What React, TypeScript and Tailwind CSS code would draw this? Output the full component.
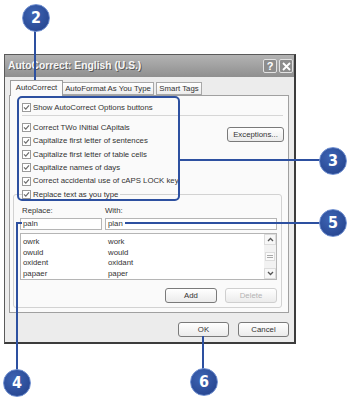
import React from "react";

const options = [
  "Correct TWo INitial CApitals",
  "Capitalize first letter of sentences",
  "Capitalize first letter of table cells",
  "Capitalize names of days",
  "Correct accidental use of cAPS LOCK key",
];

const entries = [
  ["owrk", "work"],
  ["owuld", "would"],
  ["oxident", "oxidant"],
  ["papaer", "paper"],
];

function Check() {
  return (
    <span className="flex h-[9px] w-[9px] shrink-0 items-center justify-center border border-[#9a9a9a] bg-white">
      <svg width="7" height="7" viewBox="0 0 7 7">
        <path d="M1 3.4 L2.8 5.2 L6 1.4" fill="none" stroke="#6d6d6d" strokeWidth="1.2" />
      </svg>
    </span>
  );
}

function Badge({ n, className }: { n: string; className: string }) {
  return (
    <div
      className={`absolute flex h-[28px] w-[28px] items-center justify-center rounded-full border-[1.5px] border-[#6f8fd0] bg-[radial-gradient(circle_at_40%_35%,#3d64b4,#223f88)] font-['Liberation_Sans_Narrow','DejaVu_Sans_Condensed',sans-serif] text-[16px] font-bold text-white ${className}`}
    >
      {n}
    </div>
  );
}

function Btn({ label, disabled, className }: { label: string; disabled?: boolean; className: string }) {
  return (
    <div
      className={`flex h-[15px] items-center justify-center rounded-[3px] border bg-gradient-to-b from-white to-[#ebebeb] ${
        disabled ? "border-[#cfcfcf] text-[#b3b3b3]" : "border-[#7a7a7a] text-[#333]"
      } ${className}`}
    >
      {label}
    </div>
  );
}

export default function App() {
  return (
    <div className="relative h-[398px] w-[350px] overflow-hidden whitespace-nowrap bg-white font-['Liberation_Sans',Arial,sans-serif] text-[7.8px] leading-none text-[#333]">
      <div className="pl-[4px] pt-[54px]">
        {/* dialog */}
        <div className="flex h-[290px] w-[292px] flex-col border border-r-2 border-b-2 border-[#5a5a5a] border-r-[#3c3c3c] border-b-[#3c3c3c] bg-[#ececec]">
          {/* title bar */}
          <div className="flex h-[22px] items-center justify-between bg-gradient-to-b from-[#b3b3b3] to-[#8f8f8f] pl-[3px] pr-[1px]">
            <span className="text-[10.3px] font-bold text-[#f6f6f6] [text-shadow:1px_1px_0_#5a5a5a]">
              AutoCorrect: English (U.S.)
            </span>
            <div className="flex gap-[2px]">
              <div className="flex h-[14px] w-[14px] items-center justify-center rounded-[2px] border border-[#e2e2e2] bg-[#8d8d8d] text-[11px] font-bold text-white">
                ?
              </div>
              <div className="flex h-[14px] w-[14px] items-center justify-center rounded-[2px] border border-[#e2e2e2] bg-[#8d8d8d]">
                <svg width="9" height="9" viewBox="0 0 9 9">
                  <path d="M1 1 L8 8 M8 1 L1 8" stroke="white" strokeWidth="1.8" />
                </svg>
              </div>
            </div>
          </div>

          {/* tabs */}
          <div className="relative z-10 ml-[5px] mt-[3px] flex h-[16px] items-end">
            <div className="flex h-[16px] w-[53px] items-center justify-center border border-b-0 border-[#9c9c9c] bg-[#fafafa] pb-[1px]">
              AutoCorrect
            </div>
            <div className="mb-[1px] flex h-[13px] w-[91px] items-center justify-center border border-l-0 border-[#a8a8a8] bg-gradient-to-b from-white to-[#ececec]">
              AutoFormat As You Type
            </div>
            <div className="mb-[1px] ml-[2px] flex h-[13px] w-[46px] items-center justify-center border border-[#a8a8a8] bg-gradient-to-b from-white to-[#ececec]">
              Smart Tags
            </div>
          </div>

          {/* panel */}
          <div className="-mt-px ml-[4px] flex h-[218px] w-[280px] flex-col border border-[#a0a0a0] bg-[#fafafa] pr-[5px]">
            <div className="box-content flex h-[13px] items-center gap-[2px] pl-[12px] pt-[5px]">
              <Check />
              <span>Show AutoCorrect Options buttons</span>
            </div>
            <div className="ml-[12px] mt-[1px] h-px bg-[#d6d6d6]" />
            <div className="mt-[5px] flex justify-between">
              <div className="flex flex-col pl-[12px]">
                {options.map((o) => (
                  <div key={o} className="flex h-[13.4px] items-center gap-[2px]">
                    <Check />
                    <span>{o}</span>
                  </div>
                ))}
              </div>
              <Btn label="Exceptions..." className="mr-[-1px] mt-[6px] w-[57px]" />
            </div>

            <fieldset className="ml-[3px] mr-[1px] rounded-[3px] border border-[#d2d2d2] pb-[4px] pl-[6px] pr-[4px]">
              <legend className="ml-[2px] flex h-[13.4px] items-center gap-[2px] pr-[2px]">
                <Check />
                <span>Replace text as you type</span>
              </legend>
              <div className="mt-[4px] flex h-[12px] items-center">
                <span className="w-[85px] pl-[2px]">Replace:</span>
                <span>With:</span>
              </div>
              <div className="mt-[1px] flex gap-[3px]">
                <div className="flex h-[12px] w-[82px] items-center border border-[#b5b5b5] bg-white pl-[2px]">paln</div>
                <div className="flex h-[12px] flex-1 items-center border border-[#b5b5b5] bg-white pl-[2px]">plan</div>
              </div>
              <div className="mt-[3px] flex h-[47px] border border-[#b5b5b5] bg-white">
                <div className="flex flex-1 flex-col pt-[2px]">
                  {entries.map(([a, b]) => (
                    <div key={a} className="flex h-[11px] items-center pl-[2px]">
                      <span className="w-[85px]">{a}</span>
                      <span>{b}</span>
                    </div>
                  ))}
                </div>
                <div className="flex w-[12px] flex-col justify-between bg-[#f2f2f2]">
                  <div className="flex h-[11px] items-center justify-center border border-[#dcdcdc] bg-[#f7f7f7]">
                    <svg width="7" height="5" viewBox="0 0 7 5">
                      <path d="M1 4 L3.5 1.5 L6 4" fill="none" stroke="#555" strokeWidth="1.3" />
                    </svg>
                  </div>
                  <div className="mx-[1px] flex h-[9px] flex-col items-center justify-center gap-[1px] border border-[#dcdcdc] bg-[#fafafa]">
                    <div className="h-px w-[6px] bg-[#aaa]" />
                    <div className="h-px w-[6px] bg-[#aaa]" />
                  </div>
                  <div className="flex h-[11px] items-center justify-center border border-[#dcdcdc] bg-[#f7f7f7]">
                    <svg width="7" height="5" viewBox="0 0 7 5">
                      <path d="M1 1 L3.5 3.5 L6 1" fill="none" stroke="#555" strokeWidth="1.3" />
                    </svg>
                  </div>
                </div>
              </div>
              <div className="mt-[8px] flex justify-end gap-[8px]">
                <Btn label="Add" className="w-[52px]" />
                <Btn label="Delete" disabled className="w-[52px]" />
              </div>
            </fieldset>
          </div>

          {/* bottom buttons */}
          <div className="mr-[5px] mt-[9px] flex justify-end gap-[9px]">
            <Btn label="OK" className="w-[51px]" />
            <Btn label="Cancel" className="w-[51px]" />
          </div>
        </div>
      </div>

      {/* callout highlight + lines */}
      <div className="absolute left-[17px] top-[96px] h-[105px] w-[163px] rounded-[5px] border-2 border-[#2d50a0]" />
      <div className="absolute left-[34px] top-[30px] h-[50px] w-[2px] bg-[#2d50a0]" />
      <div className="absolute left-[179px] top-[159px] h-[2px] w-[141px] bg-[#2d50a0]" />
      <div className="absolute left-[125px] top-[222px] h-[2px] w-[195px] bg-[#2d50a0]" />
      <div className="absolute left-[16px] top-[222px] h-[148px] w-[2px] bg-[#2d50a0]" />
      <div className="absolute left-[16px] top-[222px] h-[2px] w-[6px] bg-[#2d50a0]" />
      <div className="absolute left-[202px] top-[336px] h-[33px] w-[2px] bg-[#2d50a0]" />

      <Badge n="2" className="left-[22px] top-[4px]" />
      <Badge n="3" className="left-[319px] top-[147px]" />
      <Badge n="5" className="left-[319px] top-[209px]" />
      <Badge n="4" className="left-[3px] top-[369px]" />
      <Badge n="6" className="left-[190px] top-[368px]" />
    </div>
  );
}
